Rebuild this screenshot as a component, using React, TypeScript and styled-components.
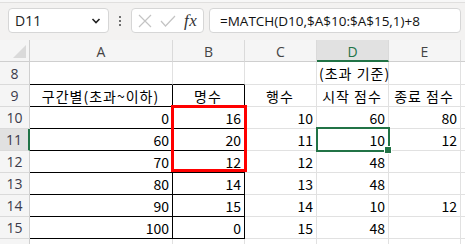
import React from "react";
import styled, { createGlobalStyle } from "styled-components";

const Global = createGlobalStyle`
  html, body { margin: 0; padding: 0; background: #ffffff; }
  body { font-family: "Noto Sans CJK KR", "Noto Sans", sans-serif; overflow: hidden; width: 465px; height: 244px; }
  * { box-sizing: border-box; }
`;

const Page = styled.div`
  width: 465px;
  height: 244px;
  overflow: hidden;
`;

const TopStrip = styled.div`
  height: 3px;
  background: #f7f7f7;
  border-bottom: 1px solid #e0dfde;
`;

const Toolbar = styled.div`
  height: 37px;
  background: #f3f2f1;
  display: flex;
  align-items: flex-start;
  padding: 5px 4px 0 8px;
`;

const Box = styled.div<{ $w?: string }>`
  height: 25px;
  background: #fff;
  border: 1px solid #d6d6d6;
  border-radius: 4px;
  display: flex;
  align-items: center;
  overflow: hidden;
  ${(p) => (p.$w ? `width: ${p.$w}; flex: none;` : "flex: 1; min-width: 0;")}
`;

const NameText = styled.span`
  font-family: "Open Sans", "Noto Sans", sans-serif;
  font-size: 14px;
  color: #222;
  padding-left: 6px;
  flex: 1;
`;

const Dots = styled.div`
  width: 22px;
  height: 25px;
  flex: none;
  display: flex;
  flex-direction: column;
  align-items: center;
  justify-content: center;
  gap: 2px;
  span { width: 2px; height: 2px; background: #444; border-radius: 1px; }
`;

const Icons = styled.div`
  display: flex;
  align-items: center;
  padding-left: 6px;
  width: 100%;
`;

const Fx = styled.span`
  font-family: "Liberation Serif", "DejaVu Serif", serif;
  font-style: italic;
  font-size: 17px;
  color: #333;
  margin-left: 8px;
  line-height: 1;
  letter-spacing: 0.5px;
`;

const Formula = styled.span`
  font-family: "Open Sans", "Noto Sans", sans-serif;
  font-size: 13.5px;
  color: #111;
  padding-left: 10px;
  white-space: nowrap;
`;

const Gap = styled.div<{ $w: number }>`
  width: ${(p) => p.$w}px;
  flex: none;
`;

const SheetWrap = styled.div`
  position: relative;
  width: 465px;
  height: 204px;
  overflow: hidden;
`;

const Grid = styled.div`
  display: grid;
  grid-template-columns: 30px 143px 72px 72px 72px 72px 72px;
  grid-template-rows: 22px 23px repeat(8, 22px);
`;

const Corner = styled.div`
  background: #f5f5f5;
  border-right: 1px solid #cfcfcf;
  border-bottom: 1px solid #cfcfcf;
  position: relative;
  &::after {
    content: "";
    position: absolute;
    right: 3px;
    bottom: 3px;
    width: 0;
    height: 0;
    border-left: 13px solid transparent;
    border-bottom: 13px solid #dadada;
  }
`;

const ColHead = styled.div<{ $sel?: boolean }>`
  background: ${(p) => (p.$sel ? "#e1e1e1" : "#f5f5f5")};
  border-right: 1px solid #dadada;
  border-bottom: ${(p) => (p.$sel ? "2px solid #217346" : "1px solid #cfcfcf")};
  display: flex;
  align-items: center;
  justify-content: center;
  font-family: "Open Sans", "Noto Sans", sans-serif;
  font-size: 14px;
  color: ${(p) => (p.$sel ? "#217346" : "#444")};
  padding-top: 2px;
`;

const RowHead = styled.div<{ $sel?: boolean }>`
  background: ${(p) => (p.$sel ? "#e1e1e1" : "#f5f5f5")};
  border-right: ${(p) => (p.$sel ? "2px solid #217346" : "1px solid #cfcfcf")};
  border-bottom: 1px solid #dadada;
  display: flex;
  align-items: center;
  justify-content: center;
  font-family: "Open Sans", "Noto Sans", sans-serif;
  font-size: 14px;
  color: #3b3b4a;
`;

const Cell = styled.div<{ $align?: string; $bb?: string; $br?: string; $ko?: boolean }>`
  border-right: 1px solid ${(p) => p.$br || "#e1e1e1"};
  border-bottom: 1px solid ${(p) => p.$bb || "#e1e1e1"};
  display: flex;
  align-items: center;
  justify-content: ${(p) =>
    p.$align === "right" ? "flex-end" : p.$align === "center" ? "center" : "flex-start"};
  padding: 0 3px 0 2px;
  font-family: "Noto Sans CJK KR", "Noto Sans", sans-serif;
  font-size: 14px;
  letter-spacing: ${(p) => (p.$ko ? "1px" : "0")};
  color: #000;
  white-space: nowrap;
  overflow: visible;
  min-width: 0;
`;

const RedBox = styled.div`
  position: absolute;
  left: 171px;
  top: 65px;
  width: 76px;
  height: 67px;
  border: 3px solid #ff0000;
  pointer-events: none;
`;

const SelBox = styled.div`
  position: absolute;
  left: 316px;
  top: 87px;
  width: 74px;
  height: 25px;
  border: 2px solid #217346;
  pointer-events: none;
  &::after {
    content: "";
    position: absolute;
    right: -4px;
    bottom: -4px;
    width: 6px;
    height: 6px;
    background: #217346;
    border: 1px solid #fff;
  }
`;

type Row = {
  n: number;
  label: boolean;
  cells: { t: string; a?: string; ko?: boolean }[];
};

const B = "#000";

const rows: Row[] = [
  {
    n: 8,
    label: true,
    cells: [{ t: "" }, { t: "" }, { t: "" }, { t: "(초과 기준)", ko: true }, { t: "" }, { t: "" }],
  },
  {
    n: 9,
    label: true,
    cells: [
      { t: "구간별(초과~이하)", a: "center", ko: true },
      { t: "명수", a: "center", ko: true },
      { t: "행수", a: "center", ko: true },
      { t: "시작 점수", a: "center", ko: true },
      { t: "종료 점수", a: "center", ko: true },
      { t: "" },
    ],
  },
  ...[
    [10, "0", "16", "10", "60", "80"],
    [11, "60", "20", "11", "10", "12"],
    [12, "70", "12", "12", "48", ""],
    [13, "80", "14", "13", "48", ""],
    [14, "90", "15", "14", "10", "12"],
    [15, "100", "0", "15", "48", ""],
  ].map((r) => ({
    n: r[0] as number,
    label: true,
    cells: [
      { t: r[1] as string, a: "right" },
      { t: r[2] as string, a: "right" },
      { t: r[3] as string, a: "right" },
      { t: r[4] as string, a: "right" },
      { t: r[5] as string, a: "right" },
      { t: "" },
    ],
  })),
  { n: 16, label: false, cells: [{ t: "" }, { t: "" }, { t: "" }, { t: "" }, { t: "" }, { t: "" }] },
];

const cols = ["A", "B", "C", "D", "E", ""];

export default function App() {
  return (
    <Page>
      <Global />
      <TopStrip />
      <Toolbar>
        <Box $w="101px">
          <NameText>D11</NameText>
          <svg width="10" height="8" viewBox="0 0 10 8" style={{ marginRight: 7 }}>
            <path d="M1.5 2 L5 5.5 L8.5 2" fill="none" stroke="#222" strokeWidth="1.6" />
          </svg>
        </Box>
        <Dots>
          <span />
          <span />
          <span />
        </Dots>
        <Box $w="73px">
          <Icons>
            <svg width="14" height="14" viewBox="0 0 14 14">
              <path d="M1 1 L13 13 M13 1 L1 13" stroke="#c4c4c4" strokeWidth="1.2" fill="none" />
            </svg>
            <Gap $w={8} />
            <svg width="16" height="14" viewBox="0 0 16 14">
              <path d="M1 7 L5.5 12 L15 2" stroke="#c4c4c4" strokeWidth="1.2" fill="none" />
            </svg>
            <Fx>fx</Fx>
          </Icons>
        </Box>
        <Gap $w={5} />
        <Box>
          <Formula>=MATCH(D10,$A$10:$A$15,1)+8</Formula>
        </Box>
      </Toolbar>
      <SheetWrap>
        <Grid>
          <Corner />
          {cols.map((c, i) => (
            <ColHead key={i} $sel={c === "D"}>
              {c}
            </ColHead>
          ))}
          {rows.map((r) => (
            <React.Fragment key={r.n}>
              <RowHead $sel={r.n === 11}>{r.label ? r.n : ""}</RowHead>
              {r.cells.map((c, i) => {
                const inTable = i < 2 && r.n >= 9 && r.n <= 15;
                const topOfTable = i < 2 && r.n === 8;
                return (
                  <Cell
                    key={i}
                    $align={c.a}
                    $ko={c.ko}
                    $bb={inTable || topOfTable ? B : undefined}
                    $br={inTable ? B : undefined}
                  >
                    {c.t}
                  </Cell>
                );
              })}
            </React.Fragment>
          ))}
        </Grid>
        <RedBox />
        <SelBox />
      </SheetWrap>
    </Page>
  );
}
